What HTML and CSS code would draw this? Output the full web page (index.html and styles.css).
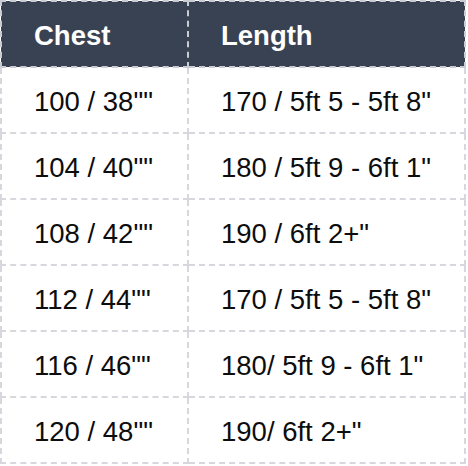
FILE: index.html
```html
<!DOCTYPE html>
<html>
<head>
<meta charset="utf-8">
<link rel="stylesheet" href="styles.css">
</head>
<body>
<table class="size-table">
  <thead>
    <tr><th class="col-chest">Chest</th><th>Length</th></tr>
  </thead>
  <tbody>
    <tr><td>100 / 38""</td><td>170 / 5ft 5 - 5ft 8"</td></tr>
    <tr><td>104 / 40""</td><td>180 / 5ft 9 - 6ft 1"</td></tr>
    <tr><td>108 / 42""</td><td>190 / 6ft 2+"</td></tr>
    <tr><td>112 / 44""</td><td>170 / 5ft 5 - 5ft 8"</td></tr>
    <tr><td>116 / 46""</td><td>180/ 5ft 9 - 6ft 1"</td></tr>
    <tr><td>120 / 48""</td><td>190/ 6ft 2+"</td></tr>
  </tbody>
</table>
</body>
</html>
```

FILE: styles.css
```css
html, body {
  margin: 0;
  padding: 0;
  background: #ffffff;
}
.size-table {
  border-collapse: collapse;
  width: 466px;
  font-family: "Liberation Sans", Arial, sans-serif;
  font-size: 27.5px;
  color: #0d0d0d;
}
.size-table th,
.size-table td {
  border: 2px dashed #d6d8de;
  height: 66px;
  padding: 3px 0 0 32px;
  text-align: left;
  vertical-align: middle;
  box-sizing: border-box;
}
.size-table th {
  background: #394253;
  color: #ffffff;
  font-weight: bold;
  border-color: #c9ccd3;
}
.size-table .col-chest {
  width: 187px;
}
```
